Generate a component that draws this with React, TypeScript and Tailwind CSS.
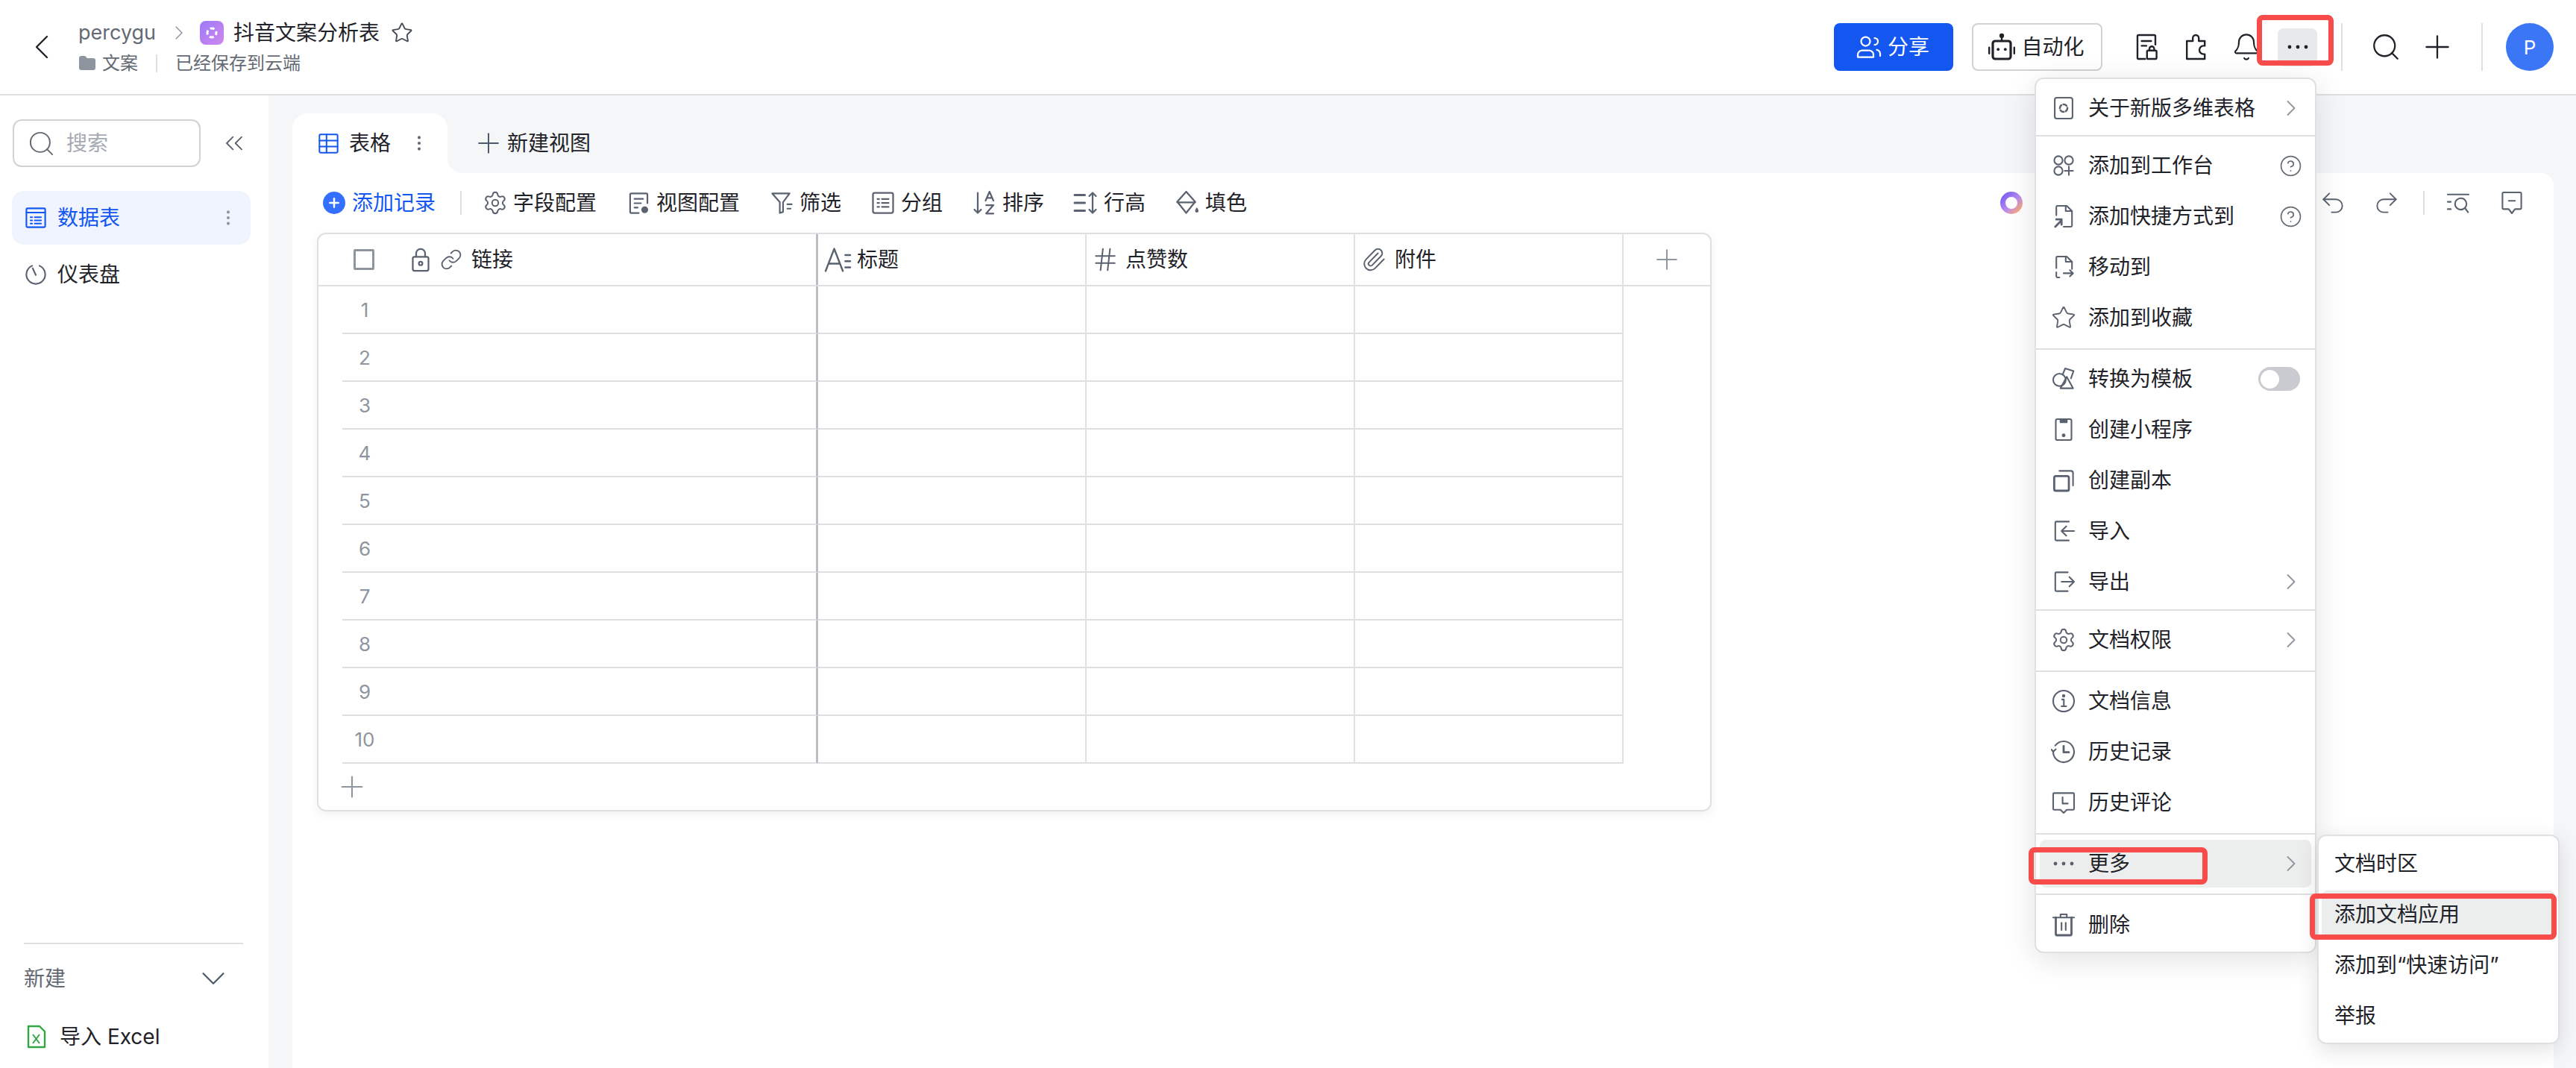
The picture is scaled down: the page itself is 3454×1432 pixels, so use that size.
import React from 'react';
import {
  Bell,
  ChevronDown,
  ChevronLeft,
  ChevronRight,
  ChevronsLeft,
  CircleHelp,
  EllipsisVertical,
  Folder,
  Hash,
  Link,
  Paperclip,
  Plus,
  Redo2,
  Search,
  Settings,
  Star,
  Undo2,
} from 'lucide-react';

type IconProps = { size?: number; className?: string };

// tight viewBox so the glyphs fill the box like the originals
const Svg: React.FC<IconProps & { children: React.ReactNode }> = ({ size = 28, className = '', children }) => (
  <svg
    width={size}
    height={size}
    viewBox="2 2 20 20"
    fill="none"
    stroke="currentColor"
    strokeWidth={1.5}
    strokeLinecap="round"
    strokeLinejoin="round"
    className={`shrink-0 overflow-visible ${className}`}
  >
    {children}
  </svg>
);

const ViewCfgIcon = (p: IconProps) => (
  <Svg {...p}>
    <path d="M12 21H5a1 1 0 0 1-1-1V4a1 1 0 0 1 1-1h14a1 1 0 0 1 1 1v8" />
    <path d="M8 8h8M8 12h6M8 16h3" />
    <circle cx="17.500" cy="18" r="2.400" fill="currentColor" />
  </Svg>
);
const FilterIcon = (p: IconProps) => (
  <Svg {...p}>
    <path d="M3 3h16l-6 8v9l-3 1v-10z" />
    <path d="M17 13h4M17 17h3" />
  </Svg>
);
const GroupIcon = (p: IconProps) => (
  <Svg {...p}>
    <rect x="3" y="3" width="18" height="18" rx="1.500" />
    <path d="M7 8.500h1.500M11 8.500h6M7 12h1.500M11 12h6M7 15.500h1.500M11 15.500h6" />
  </Svg>
);
const SortIcon = (p: IconProps) => (
  <Svg {...p}>
    <path d="M6 3v18M3 18l3 3 3-3" />
    <path d="M13 10l3.500-8 3.500 8M14.200 7.500h4.600M13.500 14h6.500l-6.500 7.500H20" />
  </Svg>
);
const RowHeightIcon = (p: IconProps) => (
  <Svg {...p}>
    <path d="M2 5h9M2 12h9M2 19h9" strokeWidth={2} />
    <path d="M18 3v18M15 6l3-3 3 3M15 18l3 3 3-3" />
  </Svg>
);
const FillIcon = (p: IconProps) => (
  <Svg {...p}>
    <path d="M11 2l8 9-8 10-8-10z" />
    <path d="M3 11.500h16" />
    <path d="M20.500 16c1 1.500 1.500 2.400 1.500 3.200a1.500 1.500 0 0 1-3 0c0-.8.500-1.700 1.500-3.200z" fill="currentColor" stroke="none" />
  </Svg>
);
const TableIcon = (p: IconProps) => (
  <Svg {...p}>
    <rect x="3" y="3" width="18" height="18" rx="1" />
    <path d="M3 9h18M3 15h18M10 3v18" />
  </Svg>
);
const DataIcon = (p: IconProps) => (
  <Svg {...p}>
    <rect x="3" y="3" width="18" height="18" rx="1" />
    <path d="M3 7h18" />
    <path d="M7 11.500h1.500M11 11.500h6M7 14.500h1.500M11 14.500h6M7 17.500h1.500M11 17.500h6" />
  </Svg>
);
const DashboardIcon = (p: IconProps) => (
  <Svg {...p}>
    <path d="M8.500 3.700a9 9 0 1 0 7 0" />
    <path d="M9 6l3 6.500" />
  </Svg>
);
const TitleFieldIcon = (p: IconProps) => (
  <Svg {...p}>
    <path d="M2 21L9 3l7 18M4.500 15h9" />
    <path d="M18 8h4M18 13h4M18 18h4" />
  </Svg>
);
const LockIcon = (p: IconProps) => (
  <Svg {...p}>
    <rect x="5" y="9.500" width="14" height="12.500" rx="1.500" />
    <path d="M8 9.500V6.500a4 4 0 0 1 8 0v3" />
    <circle cx="12" cy="15.500" r="1.600" />
  </Svg>
);
const FormIcon = (p: IconProps) => (
  <Svg {...p}>
    <path d="M11 22H5.500a1 1 0 0 1-1-1V3a1 1 0 0 1 1-1h13a1 1 0 0 1 1 1v7" />
    <path d="M8 7h8M8 11h4" />
    <rect x="12.500" y="15" width="8" height="7" rx="1" />
    <path d="M14.500 15v-1.500a2 2 0 0 1 4 0V15" />
  </Svg>
);
const PuzzleIcon = (p: IconProps) => (
  <Svg {...p}>
    <path d="M4 7h5V4.500a2.500 2.500 0 0 1 5 0V7h5v4h-1a3.500 3.500 0 0 0 0 7h1v4H4z" />
  </Svg>
);
const ShareIcon = (p: IconProps) => (
  <Svg {...p}>
    <circle cx="9" cy="7" r="4" />
    <path d="M2 21v-2a4 4 0 0 1 4-4h6a4 4 0 0 1 4 4v2z" />
    <path d="M17 4a3 3 0 0 1 0 6M19 14.500a4 4 0 0 1 3 4V20" />
  </Svg>
);
const RobotIcon = (p: IconProps) => (
  <Svg {...p}>
    <rect x="4.500" y="7" width="15" height="15" rx="2" strokeWidth={2} />
    <path d="M12 3v4M1.500 12.500v5M22.500 12.500v5" />
    <circle cx="12" cy="2.600" r="1.200" fill="currentColor" />
    <circle cx="9" cy="14" r="1.200" fill="currentColor" stroke="none" />
    <circle cx="15" cy="14" r="1.200" fill="currentColor" stroke="none" />
  </Svg>
);
const AboutIcon = (p: IconProps) => (
  <Svg {...p}>
    <rect x="3.500" y="2" width="17" height="20" rx="2" />
    <circle cx="12" cy="12" r="3.600" strokeDasharray="3.400 2" strokeWidth={1.800} />
  </Svg>
);
const WorkbenchIcon = (p: IconProps) => (
  <Svg {...p}>
    <circle cx="7" cy="7" r="4" />
    <circle cx="17" cy="7" r="4" />
    <circle cx="7" cy="17" r="4" />
    <path d="M17 13v8M13 17h8" />
  </Svg>
);
const ShortcutIcon = (p: IconProps) => (
  <Svg {...p}>
    <path d="M5 11V3a1 1 0 0 1 1-1h9l5 5v14a1 1 0 0 1-1 1h-7" />
    <path d="M14 2v5h6" />
    <path d="M4 22l6-6M5 15h5v5" strokeWidth={2} />
  </Svg>
);
const MoveIcon = (p: IconProps) => (
  <Svg {...p}>
    <path d="M5 13V3a1 1 0 0 1 1-1h9l5 5v7" />
    <path d="M14 2v5h6" />
    <path d="M5 17v4a1 1 0 0 0 1 1h2M12 18h9M18 15l3 3-3 3" />
  </Svg>
);
const TemplateIcon = (p: IconProps) => (
  <Svg {...p}>
    <circle cx="8" cy="13" r="6" />
    <path d="M11 8l2.500-6 8 2.500-2.500 7" />
    <path d="M15 10l6 11H9z" />
  </Svg>
);
const MiniAppIcon = (p: IconProps) => (
  <Svg {...p}>
    <rect x="4.500" y="2" width="15" height="20" rx="1.500" />
    <path d="M9 2.500h6v2.500H9z" fill="currentColor" />
    <circle cx="12" cy="17.500" r="1" fill="currentColor" />
  </Svg>
);
const CopyIcon = (p: IconProps) => (
  <Svg {...p}>
    <rect x="3" y="8" width="14" height="14" rx="1.500" strokeWidth={2} />
    <path d="M8 3h11a2 2 0 0 1 2 2v12" />
  </Svg>
);
const ImportIcon = (p: IconProps) => (
  <Svg {...p}>
    <path d="M17 3H5a1 1 0 0 0-1 1v16a1 1 0 0 0 1 1h12" />
    <path d="M22 12H10M14.500 7.500L10 12l4.500 4.500" />
  </Svg>
);
const ExportIcon = (p: IconProps) => (
  <Svg {...p}>
    <path d="M16 3H5a1 1 0 0 0-1 1v16a1 1 0 0 0 1 1h11" />
    <path d="M10 12h12M17.500 7.500L22 12l-4.500 4.500" />
  </Svg>
);
const InfoIcon = (p: IconProps) => (
  <Svg {...p}>
    <circle cx="12" cy="12" r="10" />
    <path d="M10.500 10.500H12.200V17M10 17h4.500" />
    <circle cx="12" cy="7" r="0.800" fill="currentColor" />
  </Svg>
);
const HistoryIcon = (p: IconProps) => (
  <Svg {...p}>
    <path d="M4 6a10 10 0 1 1-2 6" />
    <path d="M2 12l2.500-2.500M2 12l-1.500-2" />
    <path d="M12 6.500V12.500h5" strokeWidth={2} />
  </Svg>
);
const HistoryCommentIcon = (p: IconProps) => (
  <Svg {...p}>
    <path d="M3 3h18a1 1 0 0 1 1 1v14a1 1 0 0 1-1 1h-6l-3 3-3-3H3a1 1 0 0 1-1-1V4a1 1 0 0 1 1-1z" />
    <path d="M11 7v6h5" />
  </Svg>
);
const TrashIcon = (p: IconProps) => (
  <Svg {...p}>
    <path d="M2 5h20M9 5V2h6v3" />
    <path d="M4.500 5v16a1 1 0 0 0 1 1h13a1 1 0 0 0 1-1V5" strokeWidth={2} />
    <path d="M10 10v7M14 10v7" />
  </Svg>
);
const FindIcon = (p: IconProps) => (
  <Svg {...p}>
    <path d="M2 4h20M2 11h3M2 18h3" />
    <circle cx="14.500" cy="13" r="5.500" />
    <path d="M18.500 17l3 4" />
  </Svg>
);
const CommentIcon = (p: IconProps) => (
  <Svg {...p}>
    <path d="M4 2h16a1 1 0 0 1 1 1v14a1 1 0 0 1-1 1h-5l-3 4-3-4H4a1 1 0 0 1-1-1V3a1 1 0 0 1 1-1z" />
    <path d="M9 10h6" />
  </Svg>
);
const DotsIcon = () => (
  <svg width="28" height="6" viewBox="0 0 28 6" fill="currentColor" className="shrink-0">
    <circle cx="3" cy="3" r="2.400" />
    <circle cx="14" cy="3" r="2.400" />
    <circle cx="25" cy="3" r="2.400" />
  </svg>
);
const ExcelIcon = () => (
  <svg width="26" height="32" viewBox="0 0 26 32" fill="none" stroke="#32a645" strokeWidth="2.400" strokeLinejoin="round">
    <path d="M2 2h15l7 7v21H2z" />
    <path d="M8 13l9 12M17 13l-9 12" strokeWidth="2" />
  </svg>
);
const AiRing = () => (
  <svg width="32" height="32" viewBox="0 0 32 32" fill="none">
    <defs>
      <linearGradient id="aiRing" x1="0" y1="0" x2="1" y2="1">
        <stop offset="0" stopColor="#7a5cf5" />
        <stop offset="0.550" stopColor="#b98bf0" />
        <stop offset="1" stopColor="#ffab70" />
      </linearGradient>
    </defs>
    <circle cx="16" cy="16" r="11.500" stroke="url(#aiRing)" strokeWidth="7" />
  </svg>
);
const AppLogo = () => (
  <div className="flex h-8 w-8 items-center justify-center rounded-lg bg-gradient-to-br from-[#9c79f7] to-[#cf87ee]">
    <svg width="20" height="20" viewBox="0 0 20 20" fill="none" stroke="white" strokeWidth="3">
      <circle cx="10" cy="10" r="6" strokeDasharray="6 3.400" strokeDashoffset="3" />
    </svg>
  </div>
);

const ToolItem: React.FC<{ icon: React.ReactNode; label: string }> = ({ icon, label }) => (
  <div className="flex items-center gap-[9px] text-[#1f2329]">
    <span className="flex w-[30px] justify-center text-[#5a6270]">{icon}</span>
    <span>{label}</span>
  </div>
);

const MenuRow: React.FC<{
  icon: React.ReactNode;
  label: string;
  right?: React.ReactNode;
}> = ({ icon, label, right }) => (
  <div className="flex h-[68px] items-center pl-[23px] pr-[18px]">
    <span className="flex w-[28px] justify-center text-[#5a6270]">{icon}</span>
    <span className="ml-[19px]">{label}</span>
    {right && <span className="ml-auto flex text-[#8f959e]">{right}</span>}
  </div>
);

const MenuDivider: React.FC<{ className: string }> = ({ className }) => (
  <div className={`h-[2px] bg-[#dee0e3] ${className}`} />
);

const Arrow = <ChevronRight size={36} strokeWidth={1.200} className="-mr-[4px] shrink-0" />;
const Help = <CircleHelp size={31} strokeWidth={1.300} className="-mr-[1px] shrink-0 text-[#646a73]" />;

const rows = [1, 2, 3, 4, 5, 6, 7, 8, 9, 10];

export default function App() {
  return (
    <div
      className="relative flex h-screen flex-col overflow-hidden bg-white text-[28px] text-[#1f2329]"
      style={{ fontFamily: 'Inter, "Noto Sans CJK SC", sans-serif' }}
    >
      {/* Top bar */}
      <header className="flex h-[128px] shrink-0 items-center border-b-2 border-[#dee0e3] pr-[30px]">
        <ChevronLeft size={56} strokeWidth={1} className="ml-[28px] mr-[21px]" />
        <div className="flex flex-col gap-[4px]">
          <div className="flex h-[40px] items-center">
            <span className="text-[27px] text-[#646a73]">percygu</span>
            <ChevronRight size={32} strokeWidth={1.100} className="ml-[15px] mr-[12px] text-[#8f959e]" />
            <AppLogo />
            <span className="ml-[13px]">抖音文案分析表</span>
            <Star size={30} strokeWidth={1.500} className="ml-[15px] text-[#444c58]" />
          </div>
          <div className="flex h-[34px] items-center text-[24px] text-[#646a73]">
            <Folder size={24} fill="#8f959e" stroke="#8f959e" />
            <span className="ml-[8px]">文案</span>
            <span className="ml-[24px] h-[24px] w-[2px] bg-[#dee0e3]" />
            <span className="ml-[24px]">已经保存到云端</span>
          </div>
        </div>

        <div className="ml-auto flex items-center">
          <button className="flex h-[64px] w-[160px] items-center justify-center gap-[10px] rounded-[8px] bg-[#1456f0] text-white">
            <ShareIcon size={30} />
            <span>分享</span>
          </button>
          <button className="ml-[25px] flex h-[64px] w-[175px] items-center justify-center gap-[10px] rounded-[8px] border-2 border-[#d0d3d6]">
            <RobotIcon size={32} />
            <span>自动化</span>
          </button>
          <FormIcon size={32} className="ml-[43px]" />
          <PuzzleIcon size={32} className="ml-[35px]" />
          <Bell size={40} strokeWidth={1.300} className="ml-[31px]" />
          <div className="ml-[22px] flex h-[51px] w-[53px] items-center justify-center rounded-[8px] bg-[#e8e9eb]">
            <DotsIcon />
          </div>
          <span className="ml-[32px] h-[64px] w-[2px] bg-[#dee0e3]" />
          <Search size={42} strokeWidth={1.300} className="ml-[37px]" />
          <Plus size={50} strokeWidth={1.100} className="ml-[23px]" />
          <span className="ml-[34px] h-[64px] w-[2px] bg-[#dee0e3]" />
          <div className="ml-[31px] flex h-[64px] w-[64px] items-center justify-center rounded-full bg-[#3b76f6] text-[26px] text-white">
            P
          </div>
        </div>
      </header>

      <div className="flex min-h-0 flex-1">
        {/* Sidebar */}
        <aside className="flex w-[360px] shrink-0 flex-col pt-[32px]">
          <div className="flex items-center pl-[17px]">
            <div className="flex h-[64px] w-[252px] items-center rounded-[12px] border-2 border-[#d0d3d6] pl-[17px] text-[#a6abb3]">
              <Search size={39} strokeWidth={1.200} className="text-[#646a73]" />
              <span className="ml-[14px]">搜索</span>
            </div>
            <ChevronsLeft size={40} strokeWidth={1.100} className="ml-[25px] text-[#5a6270]" />
          </div>
          <div className="ml-[16px] mt-[32px] flex h-[72px] w-[320px] items-center rounded-[16px] bg-[#eff4ff] pl-[18px] text-[#1456f0]">
            <DataIcon size={28} />
            <span className="ml-[15px]">数据表</span>
            <EllipsisVertical size={26} strokeWidth={1.800} className="ml-auto mr-[17px] text-[#8f959e]" />
          </div>
          <div className="ml-[16px] mt-[4px] flex h-[72px] items-center pl-[18px]">
            <DashboardIcon size={28} className="text-[#5a6270]" />
            <span className="ml-[15px]">仪表盘</span>
          </div>

          <div className="mx-[32px] mt-auto h-[2px] w-[294px] bg-[#dee0e3]" />
          <div className="mx-[32px] mt-[22px] flex h-[48px] w-[294px] items-center justify-between text-[#646a73]">
            <span>新建</span>
            <ChevronDown size={54} strokeWidth={1} className="mr-[13px] text-[#4e5969]" />
          </div>
          <div className="mb-[18px] ml-[36px] mt-[30px] flex h-[48px] items-center">
            <ExcelIcon />
            <span className="ml-[18px]">导入 Excel</span>
          </div>
        </aside>

        {/* Main */}
        <main className="flex min-w-0 flex-1 flex-col bg-[#f5f6f8] pl-[32px] pr-[30px] pt-[24px]">
          <div className="flex h-[80px] shrink-0 items-center">
            <div className="relative flex h-[80px] w-[208px] items-center rounded-t-[20px] bg-white pl-[35px]">
              <TableIcon size={27} className="text-[#1456f0]" />
              <span className="ml-[14px]">表格</span>
              <EllipsisVertical size={26} strokeWidth={1.800} className="ml-[25px] text-[#646a73]" />
              <div className="absolute bottom-0 left-full h-[20px] w-[20px] bg-white">
                <div className="h-full w-full rounded-bl-[20px] bg-[#f5f6f8]" />
              </div>
            </div>
            <Plus size={44} strokeWidth={1.100} className="ml-[33px] text-[#4e5969]" />
            <span className="ml-[3px]">新建视图</span>
          </div>

          <section className="min-h-0 flex-1 rounded-tr-[16px] bg-white">
            {/* Toolbar */}
            <div className="flex h-[80px] items-center pl-[41px] pr-[42px]">
              <div className="flex items-center gap-[9px] text-[#1456f0]">
                <span className="flex h-[30px] w-[30px] items-center justify-center rounded-full bg-[#3370ff]">
                  <Plus size={20} strokeWidth={3} className="text-white" />
                </span>
                <span>添加记录</span>
              </div>
              <span className="ml-[33px] h-[32px] w-[2px] bg-[#dee0e3]" />
              <div className="ml-[30px] flex items-center gap-[41px]">
                <ToolItem icon={<Settings size={34} strokeWidth={1.400} className="shrink-0" />} label="字段配置" />
                <ToolItem icon={<ViewCfgIcon size={29} />} label="视图配置" />
                <ToolItem icon={<FilterIcon size={29} />} label="筛选" />
                <ToolItem icon={<GroupIcon size={30} />} label="分组" />
                <ToolItem icon={<SortIcon size={30} />} label="排序" />
                <ToolItem icon={<RowHeightIcon size={30} />} label="行高" />
                <ToolItem icon={<FillIcon size={30} />} label="填色" />
              </div>
              <div className="ml-auto flex items-center text-[#5a6270]">
                <AiRing />
                <Undo2 size={38} strokeWidth={1.200} className="ml-[396px]" />
                <Redo2 size={38} strokeWidth={1.200} className="ml-[34px]" />
                <span className="ml-[30px] h-[32px] w-[2px] bg-[#dee0e3]" />
                <FindIcon size={28} className="ml-[31px]" />
                <CommentIcon size={28} className="ml-[44px]" />
              </div>
            </div>

            {/* Table */}
            <div className="ml-[33px] h-[776px] w-[1870px] overflow-hidden rounded-[12px] border-2 border-[#dee0e3] shadow-[0_4px_14px_rgba(0,0,0,0.06)]">
              <div className="flex h-[70px] border-b-2 border-[#dee0e3]">
                <div className="flex w-[670px] items-center border-r-[3px] border-[#bbbfc4] pl-[47px]">
                  <span className="h-[28px] w-[28px] rounded-[2px] border-[3px] border-[#8f959e]" />
                  <LockIcon size={30} className="ml-[47px] text-[#5a6270]" />
                  <Link size={30} strokeWidth={1.500} className="ml-[11px] text-[#5a6270]" />
                  <span className="ml-[12px]">链接</span>
                </div>
                <div className="flex w-[360px] items-center gap-[9px] border-r-2 border-[#dee0e3] pl-[10px]">
                  <TitleFieldIcon size={33} className="text-[#5a6270]" />
                  <span>标题</span>
                </div>
                <div className="flex w-[360px] items-center gap-[8px] border-r-2 border-[#dee0e3] pl-[6px]">
                  <Hash size={38} strokeWidth={1.300} className="text-[#5a6270]" />
                  <span>点赞数</span>
                </div>
                <div className="flex w-[360px] items-center gap-[11px] border-r-2 border-[#dee0e3] pl-[8px]">
                  <Paperclip size={34} strokeWidth={1.400} className="text-[#5a6270]" />
                  <span>附件</span>
                </div>
                <div className="flex flex-1 items-center justify-center">
                  <Plus size={44} strokeWidth={1.100} className="text-[#8f959e]" />
                </div>
              </div>
              {rows.map(n => (
                <div key={n} className="flex h-[64px] pl-[32px]">
                  <div className="flex w-[638px] items-center border-b-2 border-r-[3px] border-b-[#dee0e3] border-r-[#bbbfc4]">
                    <span className="w-[60px] text-center text-[26px] text-[#8f959e]">{n}</span>
                  </div>
                  <div className="w-[360px] border-b-2 border-r-2 border-[#dee0e3]" />
                  <div className="w-[360px] border-b-2 border-r-2 border-[#dee0e3]" />
                  <div className="w-[360px] border-b-2 border-r-2 border-[#dee0e3]" />
                </div>
              ))}
              <div className="flex h-[61px] items-center pl-[22px]">
                <Plus size={46} strokeWidth={1.100} className="text-[#8f959e]" />
              </div>
            </div>
          </section>
        </main>
      </div>

      {/* Dropdown menu */}
      <div className="absolute left-[2728px] top-[104px] h-[1174px] w-[378px] rounded-[12px] border-2 border-[#dee0e3] bg-white pt-[5px] shadow-[0_8px_40px_rgba(0,0,0,0.12)]">
        <MenuRow icon={<AboutIcon size={28} />} label="关于新版多维表格" right={Arrow} />
        <MenuDivider className="mt-[2px]" />
        <div className="mt-[5px]">
          <MenuRow icon={<WorkbenchIcon />} label="添加到工作台" right={Help} />
          <MenuRow icon={<ShortcutIcon />} label="添加快捷方式到" right={Help} />
          <MenuRow icon={<MoveIcon />} label="移动到" />
          <MenuRow icon={<Star size={34} strokeWidth={1.300} className="shrink-0" />} label="添加到收藏" />
        </div>
        <MenuDivider className="mt-[7px]" />
        <div className="mt-[5px]">
          <MenuRow
            icon={<TemplateIcon />}
            label="转换为模板"
            right={
              <span className="mr-[2px] flex h-[32px] w-[56px] items-center rounded-full bg-[#c9cbd0] pl-[3px]">
                <span className="h-[25px] w-[25px] rounded-full bg-white" />
              </span>
            }
          />
          <MenuRow icon={<MiniAppIcon />} label="创建小程序" />
          <MenuRow icon={<CopyIcon />} label="创建副本" />
          <MenuRow icon={<ImportIcon />} label="导入" />
          <MenuRow icon={<ExportIcon />} label="导出" right={Arrow} />
        </div>
        <MenuDivider className="mt-[3px]" />
        <div className="mt-[5px]">
          <MenuRow icon={<Settings size={34} strokeWidth={1.400} className="shrink-0" />} label="文档权限" right={Arrow} />
        </div>
        <MenuDivider className="mt-[7px]" />
        <div className="mt-[5px]">
          <MenuRow icon={<InfoIcon />} label="文档信息" />
          <MenuRow icon={<HistoryIcon />} label="历史记录" />
          <MenuRow icon={<HistoryCommentIcon />} label="历史评论" />
        </div>
        <MenuDivider className="mt-[7px]" />
        <div className="mx-[5px] mt-[7px] flex h-[64px] items-center rounded-[8px] bg-[#eceded] pl-[18px] pr-[13px]">
          <span className="flex w-[28px] justify-center text-[#5a6270]">
            <DotsIcon />
          </span>
          <span className="ml-[19px]">更多</span>
          <span className="ml-auto flex text-[#8f959e]">{Arrow}</span>
        </div>
        <MenuDivider className="mt-[8px]" />
        <div className="mt-[6px]">
          <MenuRow icon={<TrashIcon />} label="删除" />
        </div>
      </div>

      {/* Submenu */}
      <div className="absolute left-[3107px] top-[1119px] h-[281px] w-[325px] rounded-[12px] border-2 border-[#dee0e3] bg-white pt-[3px] shadow-[0_8px_28px_rgba(0,0,0,0.12)]">
        <div className="flex h-[68px] items-center pl-[21px]">文档时区</div>
        <div className="mx-[4px] my-[2px] flex h-[64px] items-center rounded-[8px] bg-[#eceded] pl-[17px]">添加文档应用</div>
        <div className="flex h-[68px] items-center pl-[21px]">添加到“快速访问”</div>
        <div className="flex h-[68px] items-center pl-[21px]">举报</div>
      </div>

      {/* Red annotation boxes */}
      <div className="absolute left-[3026px] top-[20px] h-[68px] w-[103px] rounded-[8px] border-[7px] border-[#f74c4a]" />
      <div className="absolute left-[2720px] top-[1136px] h-[50px] w-[240px] rounded-[8px] border-[7px] border-[#f74c4a]" />
      <div className="absolute left-[3097px] top-[1198px] h-[62px] w-[331px] rounded-[8px] border-[7px] border-[#f74c4a]" />
    </div>
  );
}
